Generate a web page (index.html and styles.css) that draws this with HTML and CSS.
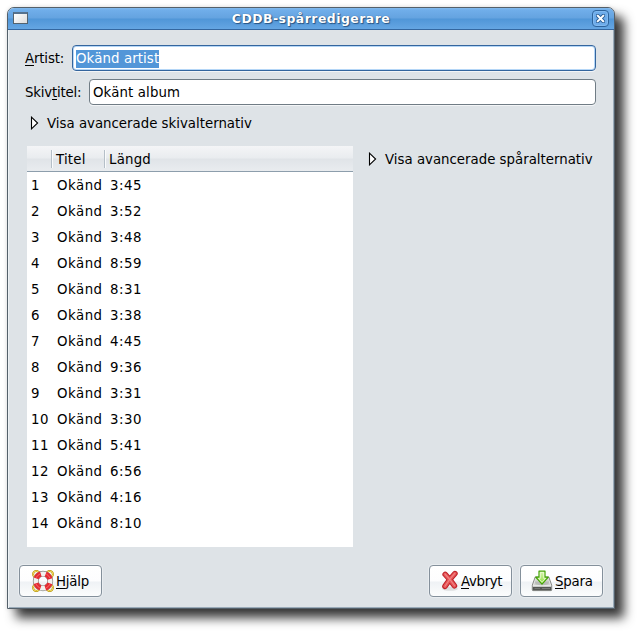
FILE: index.html
```html
<!DOCTYPE html>
<html lang="sv">
<head>
<meta charset="utf-8">
<title>CDDB-spårredigerare</title>
<link rel="stylesheet" href="styles.css">
</head>
<body>
<div class="window">
  <header class="titlebar">
    <span class="window-icon"></span>
    <h1 class="title">CDDB-spårredigerare</h1>
    <button class="close" aria-label="Stäng">
      <svg width="9" height="9" viewBox="0 0 9 9"><path d="M1.7 1.7L7.3 7.3M7.3 1.7L1.7 7.3" stroke="#2b5f97" stroke-width="3.8" stroke-linecap="square"/><path d="M1.8 1.8L7.2 7.2M7.2 1.8L1.8 7.2" stroke="#fff" stroke-width="2" stroke-linecap="square"/></svg>
    </button>
  </header>
  <main class="content">
    <div class="field"><label class="artist"><u>A</u>rtist:</label><div class="entry focused"><span class="selection">Okänd artist</span></div></div>
    <div class="field"><label class="album">Skiv<u>t</u>itel:</label><div class="entry"><span class="value">Okänt album</span></div></div>
    <div class="expander disc"><svg width="9" height="14" viewBox="0 0 9 14"><path d="M1.5 1.2V12.8L7.6 7Z" fill="#fff" stroke="#000" stroke-width="1.1"/></svg><span class="disc-label">Visa avancerade skivalternativ</span></div>
    <div class="panes">
      <div class="tracks">
        <div class="row head"><span></span><span>Titel</span><span>Längd</span></div>
        <div class="row"><span>1</span><span>Okänd</span><span>3:45</span></div>
        <div class="row"><span>2</span><span>Okänd</span><span>3:52</span></div>
        <div class="row"><span>3</span><span>Okänd</span><span>3:48</span></div>
        <div class="row"><span>4</span><span>Okänd</span><span>8:59</span></div>
        <div class="row"><span>5</span><span>Okänd</span><span>8:31</span></div>
        <div class="row"><span>6</span><span>Okänd</span><span>3:38</span></div>
        <div class="row"><span>7</span><span>Okänd</span><span>4:45</span></div>
        <div class="row"><span>8</span><span>Okänd</span><span>9:36</span></div>
        <div class="row"><span>9</span><span>Okänd</span><span>3:31</span></div>
        <div class="row"><span>10</span><span>Okänd</span><span>3:30</span></div>
        <div class="row"><span>11</span><span>Okänd</span><span>5:41</span></div>
        <div class="row"><span>12</span><span>Okänd</span><span>6:56</span></div>
        <div class="row"><span>13</span><span>Okänd</span><span>4:16</span></div>
        <div class="row"><span>14</span><span>Okänd</span><span>8:10</span></div>
      </div>
      <div class="expander track"><svg width="9" height="14" viewBox="0 0 9 14"><path d="M1.5 1.2V12.8L7.6 7Z" fill="#fff" stroke="#000" stroke-width="1.1"/></svg><span class="track-label">Visa avancerade spåralternativ</span></div>
    </div>
  </main>
  <footer class="actions">
    <button class="btn help">
      <svg width="22" height="22" viewBox="0 0 22 22" fill="none">
        <g stroke="#b99608" stroke-width="2"><circle cx="4.3" cy="4.3" r="3.2"/><circle cx="17.7" cy="4.3" r="3.2"/><circle cx="4.3" cy="17.7" r="3.2"/><circle cx="17.7" cy="17.7" r="3.2"/></g>
        <g stroke="#f3dc62" stroke-width="1"><circle cx="4.3" cy="4.3" r="3.2"/><circle cx="17.7" cy="4.3" r="3.2"/><circle cx="4.3" cy="17.7" r="3.2"/><circle cx="17.7" cy="17.7" r="3.2"/></g>
        <circle cx="11" cy="11" r="7.3" stroke="#85857f" stroke-width="5.8"/>
        <circle cx="11" cy="11" r="7.3" stroke="#f2f2ef" stroke-width="4.4"/>
        <circle cx="11" cy="11" r="7.3" stroke="#e42c32" stroke-width="5.2" stroke-dasharray="6.6 4.867" stroke-dashoffset="-2.43"/>
        <circle cx="11" cy="11" r="7.6" stroke="#fa6a6a" stroke-width="1" stroke-dasharray="5.4 6.538" stroke-dashoffset="-3.27"/>
      </svg><span class="help-text"><u>H</u>jälp</span>
    </button>
    <span class="spacer"></span>
    <button class="btn cancel">
      <svg width="20" height="22" viewBox="0 0 20 22">
        <ellipse cx="10" cy="18.8" rx="8" ry="2" fill="#000" opacity=".1"/>
        <path d="M5.2 4.4Q10 9.3 14.4 15.8M14.9 3.6Q9.6 9 5 16.3" fill="none" stroke="#bd2027" stroke-width="5.6" stroke-linecap="round"/>
        <path d="M5.2 4.4Q10 9.3 14.4 15.8M14.9 3.6Q9.6 9 5 16.3" fill="none" stroke="#e65457" stroke-width="3.6" stroke-linecap="round"/>
        <path d="M5 4Q10 9 14.6 15.8M14.8 3.4Q9.6 9 5 16.2" fill="none" stroke="#f08484" stroke-width="1.1" stroke-linecap="round"/>
      </svg><span class="cancel-text"><u>A</u>vbryt</span>
    </button>
    <button class="btn save">
      <svg width="22" height="22" viewBox="0 0 22 22">
        <defs><linearGradient id="arrow" x1="0" y1="0" x2="0" y2="1"><stop offset="0" stop-color="#dcf5b8"/><stop offset="1" stop-color="#8be03a"/></linearGradient></defs>
        <path d="M4.2 7H17.8L20.7 15.2V20Q20.7 20.6 20 20.6H2Q1.3 20.6 1.3 20V15.2Z" fill="#e7e8e6" stroke="#858784"/>
        <path d="M5 8.2H17L19.3 15H2.7Z" fill="#d3d5d1"/>
        <path d="M4.5 14.2Q11 16.5 17.5 14.2L18 11.5H4Z" fill="#b9bcb7"/>
        <path d="M1.8 16.8H20.2V20.2H1.8Z" fill="#555754"/>
        <path d="M3.5 18.5H9" stroke="#747772" stroke-width="1"/><path d="M11.5 18.5H18.5" stroke="#a0a29e" stroke-dasharray="1 1"/>
        <path d="M8 1.1H14V7.2H17.3L11 14.2L4.7 7.2H8Z" fill="url(#arrow)" stroke="#43a306" stroke-width="1.2" stroke-linejoin="round"/>
        <path d="M9.3 2.4H12.7V8.4H14.6L11 12.3L7.4 8.4H9.3Z" fill="none" stroke="#effad9" stroke-width=".8"/>
      </svg><span class="save-text"><u>S</u>para</span>
    </button>
  </footer>
</div>
</body>
</html>
```
FILE: styles.css
```css
* { box-sizing: border-box; }
body {
  margin: 0;
  width: 638px;
  height: 632px;
  padding: 7px;
  overflow: hidden;
  background: #fff;
  color: #000;
  font: 13.33px/18px "DejaVu Sans", sans-serif;
  white-space: nowrap;
}
u { text-decoration: underline; text-decoration-thickness: 1px; text-underline-offset: 2px; text-decoration-skip-ink: none; }
svg { display: block; flex: none; }
.window {
  display: flex;
  flex-direction: column;
  width: 608px;
  height: 602px;
  border: 1px solid #54606a;
  border-radius: 7px 7px 0 0;
  background: #dee3e7;
  box-shadow: inset 1px 0 #eef2f5, inset -1px -1px #9aabb9, 9px 9px 11px rgba(0, 0, 0, .78), 0 0 4px rgba(0, 0, 0, .12);
}
.titlebar {
  display: flex;
  align-items: center;
  flex: none;
  height: 22px;
  padding: 0 5px;
  border-bottom: 1px solid #3467a0;
  border-radius: 6px 6px 0 0;
  background: linear-gradient(#82baee 0, #70aeea 2px, #64a3e0 10px, #5096d8 11px, #65a6e3 21px);
}
.window-icon { width: 15px; height: 12px; margin: 0 0 1px; border: 1px solid #54636f; border-top: 2px solid #55718e; background: linear-gradient(135deg, #fff, #dcdcdc); }
.title {
  flex: 1;
  margin: 0 0 0 2px;
  color: #fff;
  font-size: 12.4px;
  letter-spacing: .5px;
  line-height: 20px;
  text-align: center;
  text-shadow: 1px 1px 1px #285482, 0 0 1px #285482;
}
.close {
  display: grid;
  place-items: center;
  width: 17px;
  height: 17px;
  padding: 0;
  border: 1px solid #2e649d;
  border-radius: 4px;
  background: #6eacea;
  box-shadow: inset 0 0 0 1px #80b9f0;
}
.content { flex: 1; padding: 15px 18px 0 17px; }
.field { display: flex; align-items: center; height: 26px; margin-bottom: 8px; }
.artist { width: 47px; letter-spacing: -.15px; padding-top: 1px; }
.album { width: 64px; letter-spacing: -.2px; padding-top: 1px; }
.entry {
  display: flex;
  align-items: center;
  flex: 1;
  height: 26px;
  padding: 1px 0 0 3px;
  border: 1px solid #707c85;
  border-radius: 4px;
  background: #fff;
  box-shadow: 0 1px #f3f5f7;
}
.value { letter-spacing: .12px; padding-top: 1px; }
.focused { border-color: #34659d; box-shadow: inset 0 0 0 1px #b4d6f7, 0 1px #f3f5f7; }
.selection { height: 18px; line-height: 18px; letter-spacing: .1px; background: #5296d8; color: #fff; }
.expander { display: flex; align-items: center; height: 18px; gap: 8px; }
.expander span { padding-top: 1px; }
.disc { margin: 9px 0 0 5px; }
.panes { display: flex; margin: 14px 0 0 2px; }
.tracks { width: 326px; height: 401px; background: #fff; }
.row { display: grid; grid-template-columns: 25px 53px 1fr; height: 26px; line-height: 28px; letter-spacing: .5px; }
.row span { padding-left: 4px; }
.row span:nth-child(2), .row span:nth-child(3) { padding-left: 5px; }
.head { letter-spacing: .2px; border-bottom: 1px solid #8d9eac; background: linear-gradient(#f4f5f7, #e9ecef 12px, #e0e4e8 13px, #e9ecef); }
.head span { height: 18px; margin-top: 4px; line-height: 20px; border-right: 1px solid #b5bfc8; box-shadow: 1px 0 #fafbfc; }
.head span:nth-child(2), .head span:nth-child(3) { padding-left: 4px; }
.head span:last-child { border: 0; box-shadow: none; }
.track { margin: 4px 0 0 15px; }
.actions { display: flex; flex: none; height: 54px; padding: 11px 11px 0; }
.btn {
  display: flex;
  align-items: center;
  width: 83px;
  height: 32px;
  padding: 0 0 0 12px;
  border: 1px solid #84909b;
  border-radius: 4px;
  background: linear-gradient(#fff 0, #fdfdfe 15px, #eff2f5 16px, #fcfdfd 30px);
  box-shadow: 0 0 0 1px #e9edf0;
  color: #000;
  font: inherit;
}
.btn span { margin-left: 2px; padding-top: 1px; letter-spacing: -.2px; }
.spacer { flex: 1; }
.cancel { padding-left: 10px; margin-right: 8px; }
.btn .cancel-text { margin-left: 1px; letter-spacing: -.35px; }
.save { padding-left: 10px; }
```
